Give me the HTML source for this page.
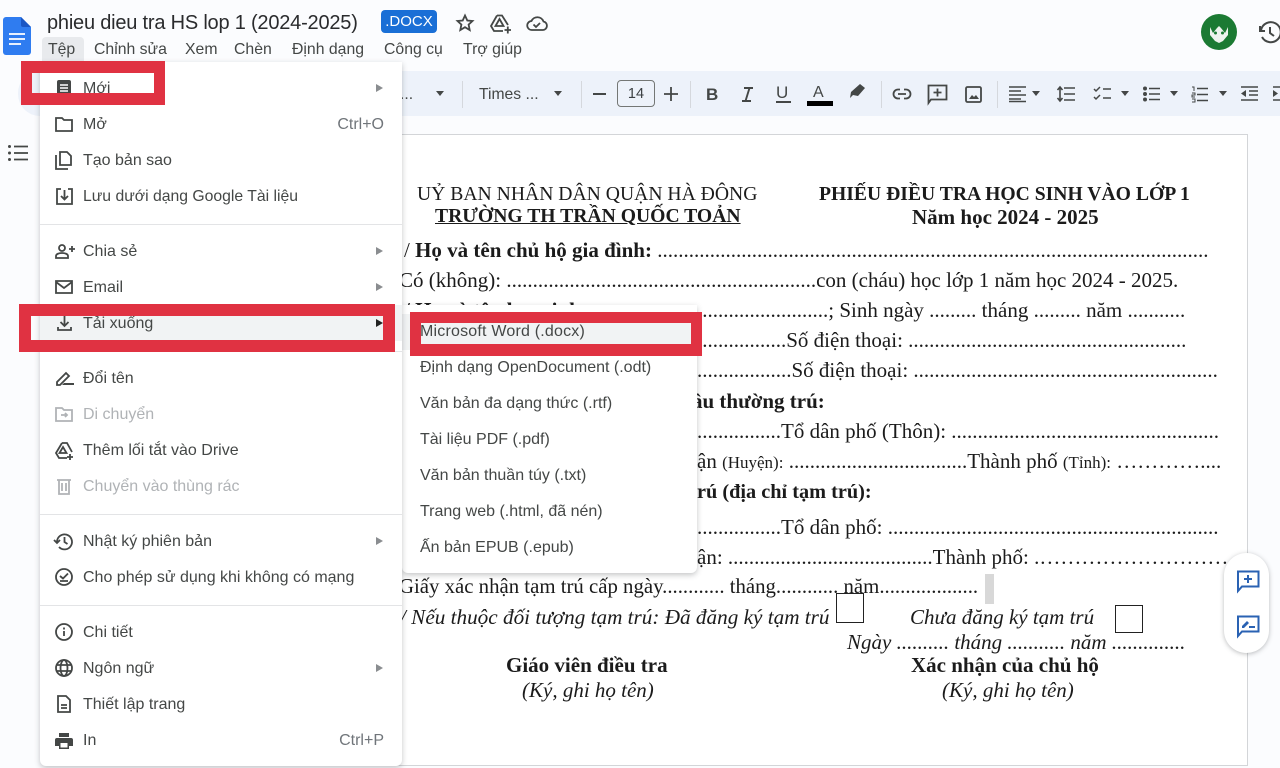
<!DOCTYPE html>
<html lang="vi"><head><meta charset="utf-8"><title>phieu dieu tra HS lop 1</title>
<style>
html,body{margin:0;padding:0}
body{width:1280px;height:768px;overflow:hidden;position:relative;background:#fbfcfe;font-family:"Liberation Sans",sans-serif;color:#3c4043}
.t{position:absolute;white-space:nowrap;line-height:20px;height:20px}
svg{position:absolute;overflow:visible}
.menu .t{font-size:16px;color:#444746}
.menu .d{color:#b0b3b6}
.sc{color:#70757a!important}
.arr{position:absolute;width:0;height:0;border-left:7px solid #8a8d90;border-top:4px solid transparent;border-bottom:4px solid transparent;left:376px}
.sep{position:absolute;left:40px;width:362px;height:1px;background:#e3e4e6}
.tb{font-size:15.7px;color:#444746}
.top{font-size:15.8px;color:#444746;top:40px}
.doc .t{font-family:"Liberation Serif",serif;font-size:21px;color:#1b1b1b;line-height:24px;height:24px}
.doc .h{font-size:19.650px}
.doc .s{font-size:17px}
.b{font-weight:bold}.i{font-style:italic}
.ddn{position:absolute;width:0;height:0;border-top:5px solid #444746;border-left:4.500px solid transparent;border-right:4.500px solid transparent}
.vs{position:absolute;width:1px;height:27px;top:81px;background:#d5d8dd}
.red{position:absolute;background:#e03242}
.ic{fill:none;stroke:#444746;stroke-width:1.8}
.sub .t{font-size:16px;color:#444746;left:420px}
</style></head><body>

<!-- toolbar -->
<div style="position:absolute;left:18px;top:71px;width:1262px;height:45px;background:#edf2fa;border-radius:22px 0 0 22px"></div>

<!-- docs logo -->
<svg style="left:3px;top:17px" width="28" height="38" viewBox="0 0 28 38"><path d="M3 0H18L28 10V35a3 3 0 0 1-3 3H3a3 3 0 0 1-3-3V3a3 3 0 0 1 3-3z" fill="#2f7cf0"/><path d="M18 0L28 10H20a2 2 0 0 1-2-2z" fill="#1a56c4"/><path d="M6 17H22M6 22H22M6 27H18" stroke="#e8f0fe" stroke-width="2"/></svg>

<div class="t" style="left:47px;top:12px;font-size:20px;letter-spacing:-.21px;color:#2a2b2d;line-height:22px;height:22px">phieu dieu tra HS lop 1 (2024-2025)</div>
<div style="position:absolute;left:381px;top:10px;width:56px;height:23px;background:#1a6fd6;border-radius:4px;color:#fff;font-size:15px;line-height:23px;text-align:center">.DOCX</div>
<svg style="left:456px;top:14px" width="18" height="18" viewBox="0 0 18 18"><path class="ic" d="M9 1.500l2.300 5 5.200.5-3.900 3.600 1.100 5.400L9 13.200 4.300 16l1.100-5.400L1.500 7l5.200-.5z"/></svg>
<svg style="left:490px;top:14px" width="22" height="20" viewBox="0 0 22 20"><path class="ic" d="M7 1.500h5l6 9.500M7 1.500L1 12l3 5h9M5.500 12h8L9.500 5z"/><path class="ic" d="M14.500 16h6.500M17.800 12.500v7" stroke-width="1.600"/></svg>
<svg style="left:526px;top:15px" width="22" height="16" viewBox="0 0 22 16"><path class="ic" d="M6 15a4.500 4.500 0 0 1-.5-9A6.500 6.500 0 0 1 17.500 6.500 4.300 4.300 0 0 1 17 15z M7.500 9.500l2.500 2.500 4-4"/></svg>

<div style="position:absolute;left:42px;top:37px;width:42px;height:25px;background:#e8eaed;border-radius:4px 4px 0 0"></div>
<div class="t top" style="left:48px">Tệp</div>
<div class="t top" style="left:94px">Chỉnh sửa</div>
<div class="t top" style="left:185px">Xem</div>
<div class="t top" style="left:234px">Chèn</div>
<div class="t top" style="left:292px">Định dạng</div>
<div class="t top" style="left:384px">Công cụ</div>
<div class="t top" style="left:463px">Trợ giúp</div>

<!-- avatar / history -->
<div style="position:absolute;left:1201px;top:14px;width:36px;height:36px;border-radius:50%;background:#1b7a33"></div>
<svg style="left:1207px;top:19px" width="24" height="26" viewBox="0 0 24 26"><path d="M12 3v3M3 8l3 6 4-5 2-2 2 2 4 5 3-6 0 8-5 6-4 2-4-2-5-6z" fill="#eef3ee"/><circle cx="8.500" cy="14" r="1.500" fill="#1b7a33"/><circle cx="15.500" cy="14" r="1.500" fill="#1b7a33"/></svg>
<svg style="left:1259px;top:21px" width="21" height="23" viewBox="0 0 21 23"><path fill="none" stroke="#444746" stroke-width="2" d="M2 9A10 10 0 1 1 3 16M1 5v5h5M11 6v6l4 3"/></svg>

<!-- toolbar content -->
<div class="t tb" style="left:400px;top:85px">...</div>
<div class="ddn" style="left:436px;top:91px"></div>
<div class="vs" style="left:462px"></div>
<div class="t tb" style="left:479px;top:85px">Times ...</div>
<div class="ddn" style="left:554px;top:91px"></div>
<div class="vs" style="left:581px"></div>
<div style="position:absolute;left:593px;top:93px;width:13px;height:2px;background:#444746"></div>
<div style="position:absolute;left:617px;top:80px;width:36px;height:25px;border:1px solid #747775;border-radius:4px;text-align:center;font-size:14.500px;line-height:26px;color:#3c4043">14</div>
<svg style="left:664px;top:87px" width="14" height="14" viewBox="0 0 14 14"><path stroke="#444746" stroke-width="1.800" d="M0 7h14M7 0v14"/></svg>
<div class="vs" style="left:690px"></div>
<div class="t b" style="left:706px;top:85px;font-size:17px;color:#444746">B</div>
<svg style="left:741px;top:87px" width="13" height="15" viewBox="0 0 13 15"><path fill="none" stroke="#444746" stroke-width="1.900" d="M3 1h9M1 14h9M8.500 1L4.500 14"/></svg>
<div class="t" style="left:776px;top:83px;font-size:17px;color:#444746">U</div>
<div style="position:absolute;left:776px;top:101px;width:15px;height:1.500px;background:#444746"></div>
<div class="t" style="left:813px;top:83px;font-size:16px;color:#444746">A</div>
<div style="position:absolute;left:807px;top:101px;width:26px;height:5px;background:#000"></div>
<svg style="left:849px;top:83px" width="17" height="17" viewBox="0 0 17 17"><path d="M11 1l5 4-7 8-5-1-3 3 1-6z" fill="#444746"/></svg>
<div class="vs" style="left:881px"></div>
<svg style="left:892px;top:87px" width="20" height="14" viewBox="0 0 20 14"><path class="ic" d="M8 2.500H6a4.500 4.500 0 0 0 0 9h2M12 2.500h2a4.500 4.500 0 0 1 0 9h-2M6 7h8" stroke-width="2"/></svg>
<svg style="left:927px;top:84px" width="21" height="20" viewBox="0 0 21 20"><path class="ic" d="M1.500 19V1.500h18v14H4zM10.500 4.500v8M6.500 8.500h8"/></svg>
<svg style="left:965px;top:86px" width="18" height="17" viewBox="0 0 18 17"><rect class="ic" x="1" y="1" width="15" height="15" rx="1.500"/><path d="M4 13l3-4 2 2 2-2 3 4z" fill="#444746"/></svg>
<div class="vs" style="left:997px"></div>
<svg style="left:1009px;top:86px" width="18" height="16" viewBox="0 0 18 16"><path stroke="#444746" stroke-width="1.500" d="M0 1h17M0 5h12M0 9h17M0 13h12M0 15.500h17"/></svg>
<div class="ddn" style="left:1032px;top:91px"></div>
<svg style="left:1056px;top:86px" width="20" height="16" viewBox="0 0 20 16"><path stroke="#444746" stroke-width="1.600" fill="none" d="M8 2h11M8 8h11M8 14h11M4 1v14M1.500 4L4 1l2.500 3M1.500 12L4 15l2.500-3"/></svg>
<svg style="left:1093px;top:86px" width="19" height="16" viewBox="0 0 19 16"><path stroke="#444746" stroke-width="1.500" fill="none" d="M1 3l2 2 4-4M1 11l2 2 4-4M10 3h8M10 12h8"/></svg>
<div class="ddn" style="left:1121px;top:91px"></div>
<svg style="left:1143px;top:86px" width="17" height="16" viewBox="0 0 17 16"><circle cx="2" cy="2.500" r="2" fill="#444746"/><circle cx="2" cy="8" r="2" fill="#444746"/><circle cx="2" cy="13.500" r="2" fill="#444746"/><path stroke="#444746" stroke-width="1.600" d="M6 2.500h11M6 8h11M6 13.500h11"/></svg>
<div class="ddn" style="left:1170px;top:91px"></div>
<svg style="left:1191px;top:86px" width="17" height="17" viewBox="0 0 17 17"><path stroke="#444746" stroke-width="1.600" d="M6 2.500h11M6 8.500h11M6 14.500h11"/><path stroke="#444746" stroke-width="1" fill="none" d="M1 1h2v4M1 7h3v2H1v2h3M1 13h3v3H1"/></svg>
<div class="ddn" style="left:1219px;top:91px"></div>
<svg style="left:1241px;top:86px" width="17" height="16" viewBox="0 0 17 16"><path stroke="#444746" stroke-width="1.600" d="M0 1h17M8 5h9M8 9h9M0 14h17"/><path d="M5 4v7L0 7.500z" fill="#444746"/></svg>
<svg style="left:1273px;top:86px" width="7" height="16" viewBox="0 0 7 16"><path stroke="#444746" stroke-width="1.600" d="M0 1h7M0 14h7"/><path d="M0 4v7l5-3.500z" fill="#444746"/></svg>

<!-- outline icon -->
<svg style="left:8px;top:145px" width="20" height="16" viewBox="0 0 20 16"><circle cx="1.500" cy="1.500" r="1.500" fill="#444746"/><circle cx="1.500" cy="8" r="1.500" fill="#444746"/><circle cx="1.500" cy="14.500" r="1.500" fill="#444746"/><path stroke="#444746" stroke-width="1.800" d="M6 1.500h14M6 8h14M6 14.500h14"/></svg>

<!-- page -->
<div style="position:absolute;left:380px;top:134px;width:866px;height:630px;background:#fff;border:1px solid #d3d5d8"></div>
<div class="doc">
<div class="t h" style="left:417px;top:182px">UỶ BAN NHÂN DÂN QUẬN HÀ ĐÔNG</div>
<div class="t b h" style="left:819px;top:182px">PHIẾU ĐIỀU TRA HỌC SINH VÀO LỚP 1</div>
<div class="t b h" style="left:435px;top:204px;text-decoration:underline">TRƯỜNG TH TRẦN QUỐC TOẢN</div>
<div class="t b" style="left:912px;top:205px">Năm học 2024 - 2025</div>
<div class="t" style="left:404px;top:238px">/ <b>Họ và tên chủ hộ gia đình:</b> .........................................................................................................</div>
<div class="t" style="left:399px;top:268px">Có (không): ...........................................................con (cháu) học lớp 1 năm học 2024 - 2025.</div>
<div class="t b" style="left:404px;top:298px">/ Họ và tên học sinh:</div>
<div class="t" style="left:697px;top:298px">.........................; Sinh ngày ......... tháng ......... năm ...........</div>
<div class="t" style="left:697px;top:328px">.................Số điện thoại: .....................................................</div>
<div class="t" style="left:697px;top:358px">..................Số điện thoại: ..........................................................</div>
<div class="t b" style="left:692px;top:389px">ầu thường trú:</div>
<div class="t" style="left:697px;top:419px">................Tổ dân phố (Thôn): ...................................................</div>
<div class="t" style="left:697px;top:449px">ận <span class="s">(Huyện):</span> ..................................Thành phố <span class="s">(Tỉnh):</span> …………....</div>
<div class="t b" style="left:697px;top:480px;font-size:20.300px">rú (địa chỉ tạm trú):</div>
<div class="t" style="left:697px;top:515px">................Tổ dân phố: ...............................................................</div>
<div class="t" style="left:697px;top:545px">ận: .......................................Thành phố: .………………………..</div>
<div class="t" style="left:399px;top:575px;font-size:20.800px">Giấy xác nhận tạm trú cấp ngày............ tháng............ năm...................</div>
<div style="position:absolute;left:985px;top:574px;width:9px;height:30px;background:#d8d8d8"></div>
<div class="t i" style="left:400px;top:605px;font-size:21.200px">/ Nếu thuộc đối tượng tạm trú: Đã đăng ký tạm trú</div>
<div style="position:absolute;left:836px;top:593px;width:26px;height:28px;border:1.500px solid #222"></div>
<div class="t i" style="left:910px;top:605px">Chưa đăng ký tạm trú</div>
<div style="position:absolute;left:1115px;top:605px;width:26px;height:26px;border:1.500px solid #222"></div>
<div class="t i" style="left:847px;top:630px">Ngày .......... tháng ........... năm ..............</div>
<div class="t b" style="left:506px;top:653px">Giáo viên điều tra</div>
<div class="t b" style="left:911px;top:653px">Xác nhận của chủ hộ</div>
<div class="t i" style="left:522px;top:678px">(Ký, ghi họ tên)</div>
<div class="t i" style="left:942px;top:678px">(Ký, ghi họ tên)</div>
</div>

<!-- floating pill -->
<div style="position:absolute;left:1224px;top:553px;width:45px;height:100px;background:#fff;border-radius:23px;box-shadow:0 1px 5px rgba(60,64,67,.35)"></div>
<svg style="left:1237px;top:570px" width="23" height="23" viewBox="0 0 23 23"><path fill="none" stroke="#2a62b3" stroke-width="2" d="M1 21V1.500h20.500v15H5zM11 5v8M7 9h8"/></svg>
<svg style="left:1237px;top:615px" width="23" height="23" viewBox="0 0 23 23"><path fill="none" stroke="#2a62b3" stroke-width="2" d="M1 21V1.500h20.500v15H5zM12 12h6"/><path d="M5 13v-2l5-5 2 2-5 5z" fill="#2a62b3"/></svg>

<!-- submenu -->
<div style="position:absolute;left:402px;top:305px;width:295px;height:268px;background:#fff;border-radius:0 0 6px 6px;box-shadow:0 2px 6px rgba(60,64,67,.3)"></div>
<div style="position:absolute;left:402px;top:314px;width:295px;height:36px;background:#f1f3f4"></div>
<div class="sub">
<div class="t" style="top:322px;letter-spacing:.2px">Microsoft Word (.docx)</div>
<div class="t" style="top:358px">Định dạng OpenDocument (.odt)</div>
<div class="t" style="top:394px">Văn bản đa dạng thức (.rtf)</div>
<div class="t" style="top:430px">Tài liệu PDF (.pdf)</div>
<div class="t" style="top:466px">Văn bản thuần túy (.txt)</div>
<div class="t" style="top:502px">Trang web (.html, đã nén)</div>
<div class="t" style="top:538px">Ấn bản EPUB (.epub)</div>
</div>

<!-- menu -->
<div style="position:absolute;left:40px;top:62px;width:362px;height:704px;background:#fff;border-radius:0 0 6px 6px;box-shadow:0 2px 6px rgba(60,64,67,.3)"></div>
<div style="position:absolute;left:40px;top:305px;width:362px;height:36px;background:#f1f3f4"></div>
<div class="menu">
<div class="t" style="left:83px;top:79px">Mới</div>
<div class="t" style="left:83px;top:115px">Mở</div><div class="t sc" style="right:896px;top:115px">Ctrl+O</div>
<div class="t" style="left:83px;top:151px">Tạo bản sao</div>
<div class="t" style="left:83px;top:187px;font-size:15.750px">Lưu dưới dạng Google Tài liệu</div>
<div class="t" style="left:83px;top:242px">Chia sẻ</div>
<div class="t" style="left:83px;top:278px">Email</div>
<div class="t" style="left:83px;top:314px">Tải xuống</div>
<div class="t" style="left:83px;top:369px">Đổi tên</div>
<div class="t d" style="left:83px;top:405px">Di chuyển</div>
<div class="t" style="left:83px;top:441px">Thêm lối tắt vào Drive</div>
<div class="t d" style="left:83px;top:477px">Chuyển vào thùng rác</div>
<div class="t" style="left:83px;top:532px">Nhật ký phiên bản</div>
<div class="t" style="left:83px;top:568px">Cho phép sử dụng khi không có mạng</div>
<div class="t" style="left:83px;top:623px">Chi tiết</div>
<div class="t" style="left:83px;top:659px">Ngôn ngữ</div>
<div class="t" style="left:83px;top:695px">Thiết lập trang</div>
<div class="t" style="left:83px;top:731px">In</div><div class="t sc" style="right:896px;top:731px">Ctrl+P</div>
</div>
<div class="sep" style="top:224px"></div><div class="sep" style="top:351px"></div><div class="sep" style="top:514px"></div><div class="sep" style="top:605px"></div>
<div class="arr" style="top:84px"></div><div class="arr" style="top:247px"></div><div class="arr" style="top:283px"></div><div class="arr" style="top:319px;border-left-color:#222"></div><div class="arr" style="top:537px"></div><div class="arr" style="top:664px"></div>

<!-- menu icons -->
<svg style="left:55px;top:80px" width="18" height="16" viewBox="0 0 18 16"><rect x="2" y="0" width="14" height="16" rx="2" fill="#444746"/><path stroke="#fff" stroke-width="1.500" d="M5 5h8M5 8h8M5 11h8"/></svg>
<svg style="left:55px;top:117px" width="18" height="15" viewBox="0 0 18 15"><path class="ic" d="M1 1h6l2 2h8v11H1z"/></svg>
<svg style="left:55px;top:151px" width="18" height="19" viewBox="0 0 18 19"><path class="ic" d="M1 4v14h12M5 1h7l4 4v9H5z"/></svg>
<svg style="left:56px;top:188px" width="17" height="17" viewBox="0 0 17 17"><path class="ic" d="M5 1H1v15h15V1h-4M8.500 2v9M5 8l3.500 3.500L12 8"/></svg>
<svg style="left:55px;top:244px" width="20" height="15" viewBox="0 0 20 15"><circle class="ic" cx="7" cy="4" r="3"/><path class="ic" d="M1 14v-2c0-2 3-3 6-3s6 1 6 3v2zM17 2v6M14 5h6"/></svg>
<svg style="left:55px;top:280px" width="18" height="14" viewBox="0 0 18 14"><path class="ic" d="M1 1h16v12H1zM1 2l8 6 8-6"/></svg>
<svg style="left:57px;top:316px" width="15" height="15" viewBox="0 0 15 15"><path class="ic" d="M7.500 0v9M3.500 6l4 4 4-4M1 11v3h13v-3"/></svg>
<svg style="left:56px;top:371px" width="18" height="15" viewBox="0 0 18 15"><path class="ic" d="M1 14v-3L10 2l3 3-9 9z"/><path d="M8 12h10v2H6z" fill="#444746"/></svg>
<svg style="left:55px;top:407px" width="18" height="15" viewBox="0 0 18 15"><path fill="none" stroke="#b0b3b6" stroke-width="1.800" d="M1 1h6l2 2h8v11H1zM6 8h6M10 6l2 2-2 2"/></svg>
<svg style="left:55px;top:442px" width="20" height="19" viewBox="0 0 20 19"><path class="ic" d="M7 1h5l5 9M7 1L1 11l3 5h8M4.500 11h7L8 5zM15 12v6M12 15h6"/></svg>
<svg style="left:57px;top:478px" width="14" height="17" viewBox="0 0 14 17"><path fill="none" stroke="#b0b3b6" stroke-width="1.800" d="M0 2h14M2 2v14h10V2M5 5v8M9 5v8"/></svg>
<svg style="left:54px;top:533px" width="19" height="17" viewBox="0 0 19 17"><path class="ic" d="M3 9a7.500 7.500 0 1 1 2 5M0 7l3 3 3-3M10.500 4v5l3 2"/></svg>
<svg style="left:55px;top:568px" width="18" height="18" viewBox="0 0 18 18"><circle class="ic" cx="9" cy="9" r="8"/><path class="ic" d="M5 8l3 2.500 5-5M5 13h8"/></svg>
<svg style="left:55px;top:623px" width="18" height="18" viewBox="0 0 18 18"><circle class="ic" cx="9" cy="9" r="8"/><path class="ic" d="M9 8v5M9 4.500v2"/></svg>
<svg style="left:55px;top:659px" width="18" height="18" viewBox="0 0 18 18"><circle class="ic" cx="9" cy="9" r="8"/><ellipse class="ic" cx="9" cy="9" rx="3.500" ry="8"/><path class="ic" d="M1.500 6h15M1.500 12h15"/></svg>
<svg style="left:57px;top:695px" width="14" height="18" viewBox="0 0 14 18"><path class="ic" d="M1 1h8l4 4v12H1zM4 10h6M4 13h6"/></svg>
<svg style="left:55px;top:733px" width="18" height="16" viewBox="0 0 18 16"><path d="M4 0h10v4H4zM2 5h14a2 2 0 0 1 2 2v6h-4v3H4v-3H0V7a2 2 0 0 1 2-2z" fill="#444746"/><rect x="5.500" y="10" width="7" height="4.500" fill="#fff"/></svg>

<!-- red annotations -->
<div class="red" style="left:21px;top:61px;width:144px;height:12px"></div>
<div class="red" style="left:21px;top:93px;width:144px;height:12px"></div>
<div class="red" style="left:21px;top:61px;width:11px;height:44px"></div>
<div class="red" style="left:154px;top:61px;width:11px;height:44px"></div>
<div class="red" style="left:19px;top:304px;width:376px;height:12px"></div>
<div class="red" style="left:19px;top:340px;width:376px;height:12px"></div>
<div class="red" style="left:19px;top:304px;width:12px;height:48px"></div>
<div class="red" style="left:383px;top:304px;width:12px;height:48px"></div>
<div class="red" style="left:410px;top:312px;width:292px;height:11px"></div>
<div class="red" style="left:410px;top:344px;width:292px;height:12px"></div>
<div class="red" style="left:410px;top:312px;width:11px;height:44px"></div>
<div class="red" style="left:691px;top:312px;width:11px;height:44px"></div>
</body></html>
